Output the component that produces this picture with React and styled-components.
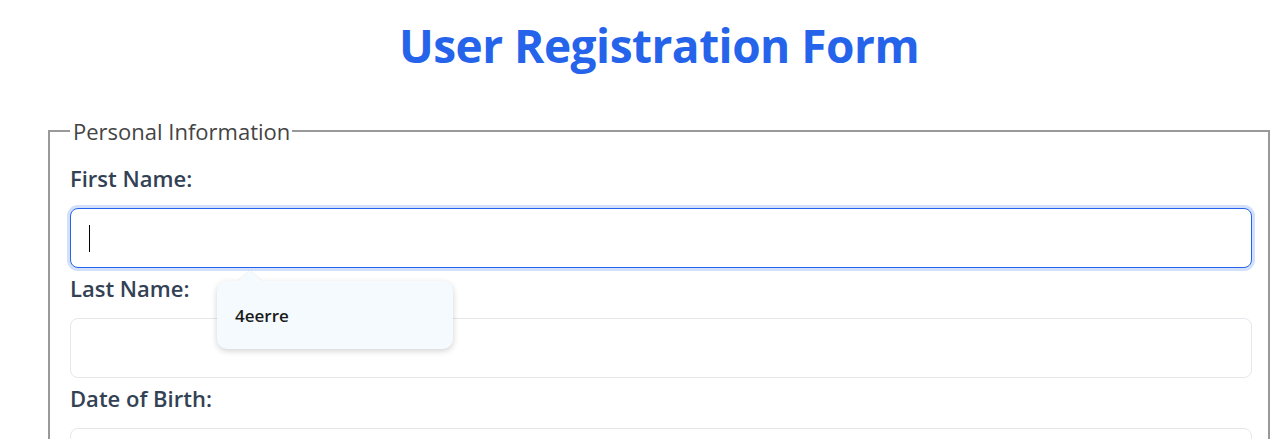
import React from "react";
import styled, { createGlobalStyle, css } from "styled-components";

const Global = createGlobalStyle`
  html, body { margin: 0; padding: 0; background: #ffffff; overflow: hidden; }
  body { font-family: "Open Sans", "Noto Sans", sans-serif; }
`;

const Page = styled.div`
  padding: 16px 0 0 48px;
  width: 1270px;
  box-sizing: border-box;
`;

const Title = styled.h1`
  margin: 0 0 42px;
  text-align: center;
  font-family: "Open Sans", sans-serif;
  font-weight: 700;
  font-size: 46px;
  line-height: 58px;
  letter-spacing: -0.5px;
  color: #2563eb;
`;

const Fieldset = styled.fieldset`
  margin: 0;
  padding: 17px 16px 0 20px;
  border: 2px solid #999999;
  border-bottom: none;
  min-width: 0;
`;

const Legend = styled.legend`
  padding: 0 2px 0 3px;
  font-size: 22px;
  line-height: 30px;
  font-weight: 400;
  color: #444444;
`;

const Label = styled.label`
  display: block;
  font-size: 22px;
  line-height: 30px;
  font-weight: 600;
  color: #334155;
  margin-bottom: 15px;
`;

const Field = styled.div`
  position: relative;
  margin-bottom: 5px;
`;

const Input = styled.input`
  display: block;
  box-sizing: border-box;
  width: 100%;
  height: 60px;
  padding: 0 20px;
  border: 1px solid #e5e7eb;
  border-radius: 8px;
  background: #ffffff;
  font-family: inherit;
  font-size: 18px;
  outline: none;
  caret-color: transparent;
  ${(p) =>
    p.$focused &&
    css`
      border-color: #2563eb;
      box-shadow: 0 0 0 3px rgba(37, 99, 235, 0.2);
    `}
`;

const Caret = styled.span`
  position: absolute;
  left: 19px;
  top: 17px;
  width: 1px;
  height: 27px;
  background: #000000;
`;

const Bubble = styled.div`
  position: absolute;
  left: 147px;
  top: 73px;
  width: 236px;
  height: 68px;
  box-sizing: border-box;
  padding: 0 18px;
  display: flex;
  align-items: center;
  background: #f4fafe;
  border-radius: 10px;
  box-shadow: 0 2px 6px rgba(0, 0, 0, 0.18);
  font-family: "Open Sans", sans-serif;
  font-size: 17px;
  font-weight: 600;
  color: #1a1a1a;
  z-index: 2;

  &::before {
    content: "";
    position: absolute;
    left: 21px;
    top: -11px;
    border-left: 12px solid transparent;
    border-right: 12px solid transparent;
    border-bottom: 11px solid #f4fafe;
    filter: drop-shadow(0 -1px 0 rgba(0, 0, 0, 0.05));
  }
`;

export default function App() {
  return (
    <>
      <Global />
      <Page>
        <Title>User Registration Form</Title>
        <Fieldset>
          <Legend>Personal Information</Legend>
          <Label htmlFor="first">First Name:</Label>
          <Field>
            <Input id="first" $focused readOnly />
            <Caret />
            <Bubble>4eerre</Bubble>
          </Field>
          <Label htmlFor="last">Last Name:</Label>
          <Field>
            <Input id="last" readOnly />
          </Field>
          <Label htmlFor="dob">Date of Birth:</Label>
          <Field>
            <Input id="dob" readOnly />
          </Field>
        </Fieldset>
      </Page>
    </>
  );
}
